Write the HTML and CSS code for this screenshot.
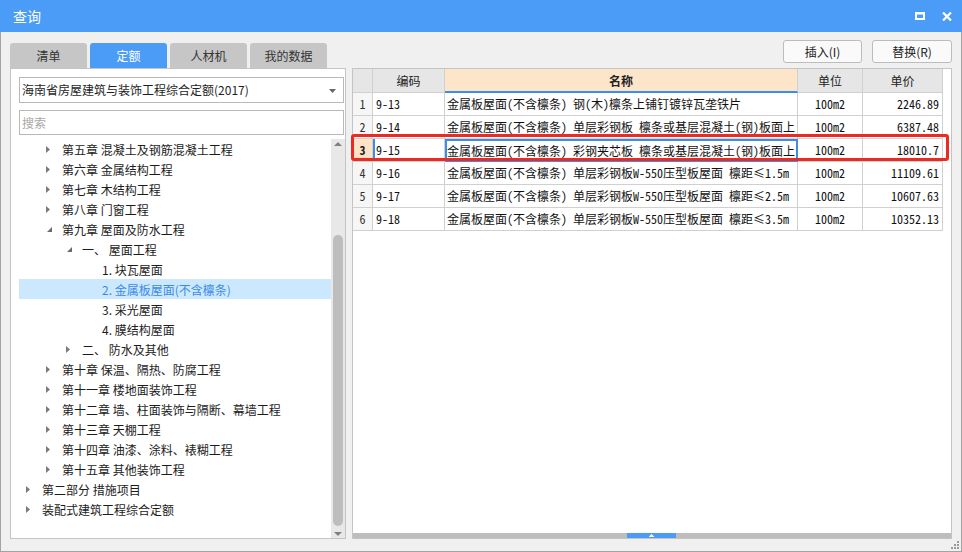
FILE: index.html
```html
<!DOCTYPE html>
<html lang="zh">
<head>
<meta charset="utf-8">
<title>查询</title>
<link rel="stylesheet" href="styles.css">
</head>
<body>
<div class="window">
  <div class="titlebar">
    <span class="title">查询</span>
    <div class="ctrls">
      <svg class="ic-max" width="10" height="8" viewBox="0 0 10 8"><rect x="1" y="1.5" width="8" height="5.5" fill="none" stroke="#fff" stroke-width="2"/><rect x="0" y="0" width="10" height="2" fill="#fff"/></svg>
      <svg class="ic-close" width="10" height="9" viewBox="0 0 10 9"><path d="M1 0.5 L9 8.5 M9 0.5 L1 8.5" stroke="#fff" stroke-width="2.2"/></svg>
    </div>
  </div>
  <div class="main">
    <div class="leftcol">
      <div class="tabs">
        <div class="tab">清单</div>
        <div class="tab active">定额</div>
        <div class="tab">人材机</div>
        <div class="tab">我的数据</div>
      </div>
      <div class="lpanel">
        <div class="select">海南省房屋建筑与装饰工程综合定额(2017)<span class="caret"></span></div>
        <div class="search">搜索</div>
        <div class="tree">
          <div class="tree-list">
            <div class="node l1"><svg class="tw" width="23" height="20" viewBox="0 0 23 20"><path d="M7 7 L11 10.5 L7 14 Z" fill="#7a7a7a"/></svg><span>第五章 混凝土及钢筋混凝土工程</span></div>
            <div class="node l1"><svg class="tw" width="23" height="20" viewBox="0 0 23 20"><path d="M7 7 L11 10.5 L7 14 Z" fill="#7a7a7a"/></svg><span>第六章 金属结构工程</span></div>
            <div class="node l1"><svg class="tw" width="23" height="20" viewBox="0 0 23 20"><path d="M7 7 L11 10.5 L7 14 Z" fill="#7a7a7a"/></svg><span>第七章 木结构工程</span></div>
            <div class="node l1"><svg class="tw" width="23" height="20" viewBox="0 0 23 20"><path d="M7 7 L11 10.5 L7 14 Z" fill="#7a7a7a"/></svg><span>第八章 门窗工程</span></div>
            <div class="node l1"><svg class="tw" width="23" height="20" viewBox="0 0 23 20"><path d="M13 8 L13 13 L8 13 Z" fill="#6a6a6a"/></svg><span>第九章 屋面及防水工程</span></div>
            <div class="node l2"><svg class="tw" width="23" height="20" viewBox="0 0 23 20"><path d="M13 8 L13 13 L8 13 Z" fill="#6a6a6a"/></svg><span>一、 屋面工程</span></div>
            <div class="node l3"><span class="tw"></span><span>1. 块瓦屋面</span></div>
            <div class="node l3 sel"><span class="tw"></span><span>2. 金属板屋面(不含檩条)</span></div>
            <div class="node l3"><span class="tw"></span><span>3. 采光屋面</span></div>
            <div class="node l3"><span class="tw"></span><span>4. 膜结构屋面</span></div>
            <div class="node l2"><svg class="tw" width="23" height="20" viewBox="0 0 23 20"><path d="M7 7 L11 10.5 L7 14 Z" fill="#7a7a7a"/></svg><span>二、 防水及其他</span></div>
            <div class="node l1"><svg class="tw" width="23" height="20" viewBox="0 0 23 20"><path d="M7 7 L11 10.5 L7 14 Z" fill="#7a7a7a"/></svg><span>第十章 保温、隔热、防腐工程</span></div>
            <div class="node l1"><svg class="tw" width="23" height="20" viewBox="0 0 23 20"><path d="M7 7 L11 10.5 L7 14 Z" fill="#7a7a7a"/></svg><span>第十一章 楼地面装饰工程</span></div>
            <div class="node l1"><svg class="tw" width="23" height="20" viewBox="0 0 23 20"><path d="M7 7 L11 10.5 L7 14 Z" fill="#7a7a7a"/></svg><span>第十二章 墙、柱面装饰与隔断、幕墙工程</span></div>
            <div class="node l1"><svg class="tw" width="23" height="20" viewBox="0 0 23 20"><path d="M7 7 L11 10.5 L7 14 Z" fill="#7a7a7a"/></svg><span>第十三章 天棚工程</span></div>
            <div class="node l1"><svg class="tw" width="23" height="20" viewBox="0 0 23 20"><path d="M7 7 L11 10.5 L7 14 Z" fill="#7a7a7a"/></svg><span>第十四章 油漆、涂料、裱糊工程</span></div>
            <div class="node l1"><svg class="tw" width="23" height="20" viewBox="0 0 23 20"><path d="M7 7 L11 10.5 L7 14 Z" fill="#7a7a7a"/></svg><span>第十五章 其他装饰工程</span></div>
            <div class="node l0"><svg class="tw" width="23" height="20" viewBox="0 0 23 20"><path d="M7 7 L11 10.5 L7 14 Z" fill="#7a7a7a"/></svg><span>第二部分 措施项目</span></div>
            <div class="node l0"><svg class="tw" width="23" height="20" viewBox="0 0 23 20"><path d="M7 7 L11 10.5 L7 14 Z" fill="#7a7a7a"/></svg><span>装配式建筑工程综合定额</span></div>
          </div>
          <div class="vscroll">
            <span class="up"></span>
            <div class="vtrack"><div class="vthumb"></div></div>
            <span class="down"></span>
          </div>
        </div>
      </div>
    </div>
    <div class="rightcol">
      <div class="btnrow">
        <button class="btn">插入(I)</button>
        <button class="btn">替换(R)</button>
      </div>
      <div class="rpanel">
        <div class="gridarea">
          <div class="grid">
            <div class="c h num"></div>
            <div class="c h">编码</div>
            <div class="c h name-h">名称</div>
            <div class="c h">单位</div>
            <div class="c h">单价</div>

            <div class="c num">1</div>
            <div class="c code">9-13</div>
            <div class="c name">金属板屋面(不含檩条) 钢(木)檩条上铺钉镀锌瓦垄铁片</div>
            <div class="c unit">100m2</div>
            <div class="c price">2246.89</div>

            <div class="c num">2</div>
            <div class="c code">9-14</div>
            <div class="c name">金属板屋面(不含檩条) 单层彩钢板 檩条或基层混凝土(钢)板面上</div>
            <div class="c unit">100m2</div>
            <div class="c price">6387.48</div>

            <div class="c num cur">3</div>
            <div class="c code cur-code">9-15</div>
            <div class="c name focus">金属板屋面(不含檩条) 彩钢夹芯板 檩条或基层混凝土(钢)板面上</div>
            <div class="c unit">100m2</div>
            <div class="c price">18010.7</div>

            <div class="c num">4</div>
            <div class="c code">9-16</div>
            <div class="c name">金属板屋面(不含檩条) 单层彩钢板W-550压型板屋面 檩距≤1.5m</div>
            <div class="c unit">100m2</div>
            <div class="c price">11109.61</div>

            <div class="c num">5</div>
            <div class="c code">9-17</div>
            <div class="c name">金属板屋面(不含檩条) 单层彩钢板W-550压型板屋面 檩距≤2.5m</div>
            <div class="c unit">100m2</div>
            <div class="c price">10607.63</div>

            <div class="c num">6</div>
            <div class="c code">9-18</div>
            <div class="c name">金属板屋面(不含檩条) 单层彩钢板W-550压型板屋面 檩距≤3.5m</div>
            <div class="c unit">100m2</div>
            <div class="c price">10352.13</div>
          </div>
          <div class="redbox"></div>
        </div>
        <div class="hbar"><div class="hthumb"><span class="tri"></span></div></div>
      </div>
    </div>
  </div>
  <svg class="grip" width="8" height="8" viewBox="0 0 8 8"><g fill="#9a9a9a"><rect x="6" y="0" width="2" height="2"/><rect x="3" y="3" width="2" height="2"/><rect x="6" y="3" width="2" height="2"/><rect x="0" y="6" width="2" height="2"/><rect x="3" y="6" width="2" height="2"/><rect x="6" y="6" width="2" height="2"/></g></svg>
</div>
</body>
</html>
```
FILE: styles.css
```css
html, body {
  margin: 0;
  padding: 0;
}
body {
  width: 962px;
  height: 552px;
  overflow: hidden;
  background: #f0f0f0;
  font-family: "Noto Sans CJK SC", "Noto Sans", sans-serif;
  color: #222;
}
.window {
  position: relative;
  width: 962px;
  height: 552px;
  box-sizing: border-box;
  border: 1px solid #a3a3a3;
  border-top: 0;
  display: flex;
  flex-direction: column;
  background: #f0f0f0;
}
.titlebar {
  height: 32px;
  margin: 0 -1px;
  flex: none;
  background: #4a9cf6;
  display: flex;
  align-items: center;
  justify-content: space-between;
  padding: 0 0 0 13px;
}
.title {
  color: #fff;
  font-size: 14px;
  line-height: 32px;
}
.ctrls {
  display: flex;
  align-items: center;
  gap: 17px;
  padding-right: 10px;
}
.ic-max { margin-top: -1px; }

.main {
  display: flex;
  gap: 6px;
  padding: 0 9px;
  height: 519px;
}
.leftcol {
  width: 336px;
  display: flex;
  flex-direction: column;
}
.tabs {
  display: flex;
  gap: 3px;
  margin-top: 11px;
  height: 25px;
}
.tab {
  width: 77px;
  height: 25px;
  background: #c6c6c6;
  border-radius: 3px 3px 0 0;
  font-size: 12px;
  line-height: 25px;
  text-align: center;
  color: #333;
}
.tab.active {
  background: #4a9cf6;
  color: #fff;
}
.lpanel {
  height: 471px;
  box-sizing: border-box;
  border: 1px solid #c4c4c4;
  background: #fff;
  padding: 8px 0 0 8px;
  display: flex;
  flex-direction: column;
}
.select {
  position: relative;
  height: 26px;
  margin-right: 1px;
  box-sizing: border-box;
  border: 1px solid #b9b9b9;
  font-size: 12px;
  line-height: 24px;
  padding-left: 2px;
  color: #1e1e1e;
}
.caret {
  position: absolute;
  right: 7px;
  top: 11px;
  width: 7px;
  height: 4px;
  background: #666;
  clip-path: polygon(0 0, 100% 0, 50% 100%);
}
.search {
  margin-top: 7px;
  margin-right: 1px;
  height: 25px;
  box-sizing: border-box;
  border: 1px solid #b9b9b9;
  font-size: 12px;
  line-height: 23px;
  padding-left: 2px;
  color: #a8a8a8;
}
.tree {
  margin-top: 4px;
  flex: 1;
  display: flex;
  min-height: 0;
}
.tree-list {
  flex: 1;
}
.node {
  height: 20px;
  display: flex;
  align-items: center;
  font-size: 12px;
  white-space: nowrap;
  color: #1c1c1c;
}
.node.l1 { padding-left: 20px; }
.node.l2 { padding-left: 40px; }
.node.l3 { padding-left: 60px; }
.node.sel {
  background: #cce8ff;
  color: #3b8be4;
}
.tw {
  display: block;
  width: 23px;
  height: 20px;
  flex: none;
}
.vscroll {
  width: 14px;
  background: #e8e8e8;
  display: flex;
  flex-direction: column;
  align-items: center;
}
.vscroll .up {
  margin-top: 3px;
  width: 8px;
  height: 4px;
  background: #808080;
  clip-path: polygon(50% 0, 100% 100%, 0 100%);
}
.vtrack {
  flex: 1;
  width: 10px;
  padding-top: 89px;
  padding-bottom: 6px;
  display: flex;
}
.vthumb {
  flex: 1;
  background: #bdbdbd;
  border-radius: 5px;
}
.vscroll .down {
  margin-bottom: 2px;
  width: 8px;
  height: 4px;
  background: #808080;
  clip-path: polygon(0 0, 100% 0, 50% 100%);
}

.rightcol {
  width: 600px;
  display: flex;
  flex-direction: column;
}
.btnrow {
  height: 36px;
  box-sizing: border-box;
  padding: 8px 0 0 0;
  display: flex;
  justify-content: flex-end;
  align-items: flex-start;
  gap: 10px;
}
.btn {
  width: 79px;
  height: 23px;
  margin: 0;
  padding: 0;
  border: 1px solid #bcbcbc;
  border-radius: 3px;
  background: #fafafa;
  font-family: "Noto Sans CJK SC", sans-serif;
  font-size: 12px;
  color: #222;
}
.btn + .btn { width: 80px; }
.rpanel {
  height: 471px;
  box-sizing: border-box;
  border: 1px solid #c4c4c4;
  background: #fff;
  display: flex;
  flex-direction: column;
}
.gridarea {
  position: relative;
  flex: 1;
}
.grid {
  display: grid;
  grid-template-columns: 20px 72px 353px 65px 80px;
  grid-template-rows: 24px repeat(6, 23px);
  font-family: "Noto Sans Mono CJK SC", "Noto Sans CJK SC", monospace;
  font-size: 12px;
  color: #111;
}
.c {
  box-sizing: border-box;
  border-right: 1px solid #d0d0d0;
  border-bottom: 1px solid #d0d0d0;
  line-height: 22px;
  white-space: nowrap;
  overflow: hidden;
}
.c.h {
  background: #e6e6e6;
  text-align: center;
  line-height: 23px;
  color: #222;
}
.c.h.name-h {
  background: #fde5c9;
  font-weight: bold;
  border-bottom: 2px solid #3a8ee6;
}
.c.num {
  background: #f6f6f6;
  text-align: center;
  color: #333;
}
.c.h.num { background: #e6e6e6; }
.c.num.cur {
  background: #fde4c6;
  font-weight: bold;
  color: #222;
}
.c.code { padding-left: 3px; }
.c.cur-code { box-shadow: inset 2px 0 0 #3a8ee6; }
.c.name { padding-left: 2px; }
.c.name.focus {
  border: 2px solid #3a8ee6;
  padding-left: 0;
  line-height: 20px;
}
.c.unit { text-align: center; }
.c.price { text-align: right; padding-right: 3px; }
.redbox {
  position: absolute;
  left: -2px;
  top: 65px;
  width: 598px;
  height: 27px;
  box-sizing: border-box;
  border: 3px solid #ec2a22;
  border-radius: 3px;
}
.hbar {
  height: 5px;
  background: #bdbdbd;
  flex: none;
}
.hthumb {
  width: 49px;
  height: 5px;
  margin-left: 274px;
  background: #4a9cf6;
  display: flex;
  justify-content: center;
  align-items: center;
}
.hthumb .tri {
  width: 6px;
  height: 3px;
  background: #fff;
  clip-path: polygon(50% 0, 100% 100%, 0 100%);
}
.grip {
  position: absolute;
  right: 2px;
  bottom: 2px;
}
```
